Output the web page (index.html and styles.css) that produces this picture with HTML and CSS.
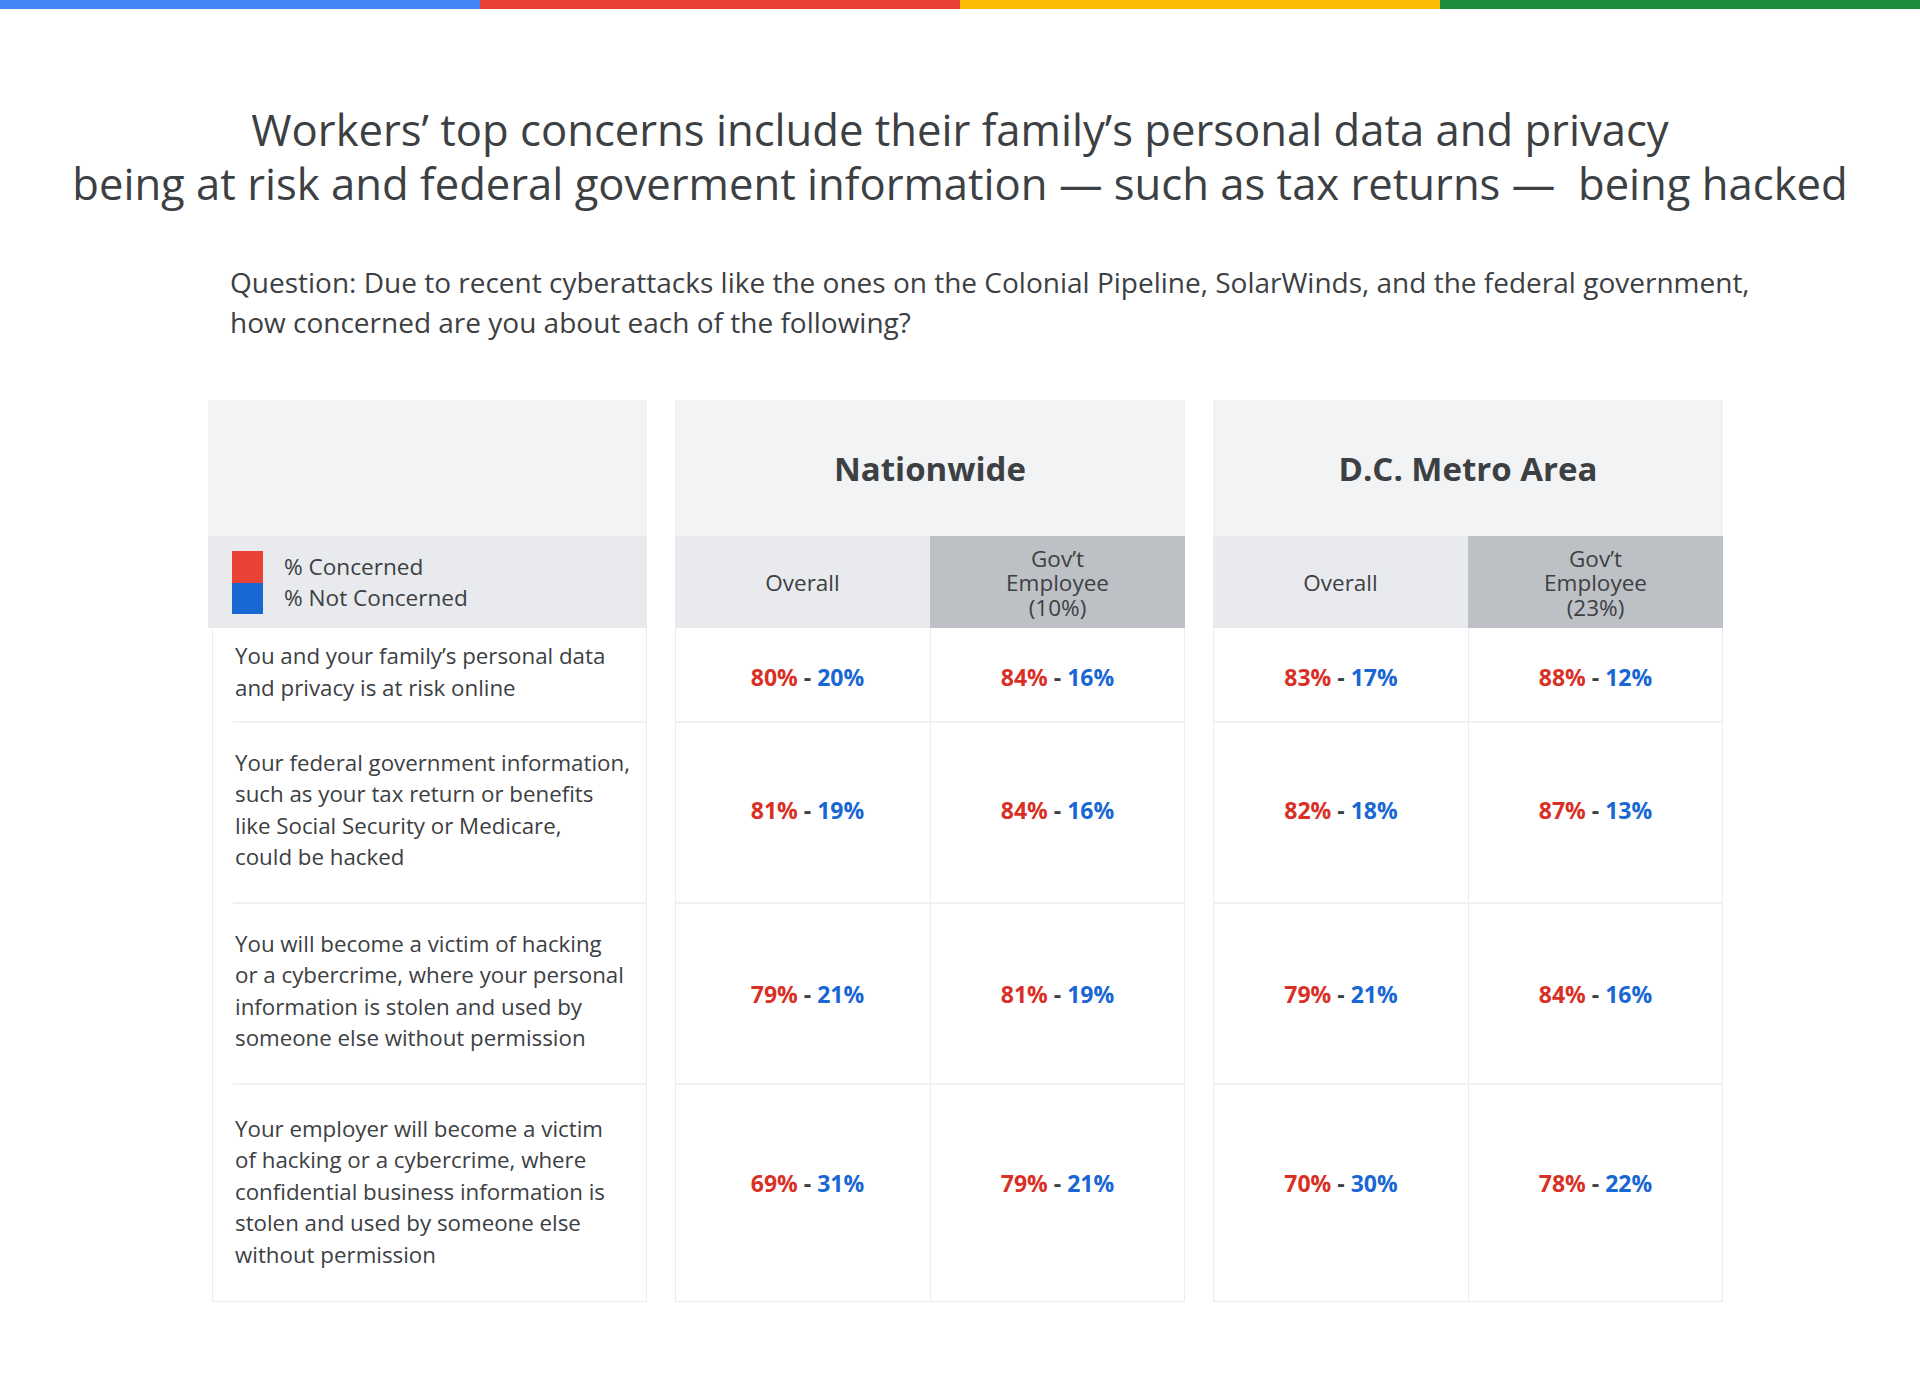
FILE: index.html
```html
<!DOCTYPE html>
<html lang="en">
<head>
<meta charset="utf-8">
<title>Workers' top concerns</title>
<link rel="stylesheet" href="styles.css">
</head>
<body>
<div class="topbar">
  <div class="seg seg-blue"></div>
  <div class="seg seg-red"></div>
  <div class="seg seg-yellow"></div>
  <div class="seg seg-green"></div>
</div>

<h1 class="title">Workers’ top concerns include their family’s personal data and privacy<br>being at risk and federal goverment information — such as tax returns —&nbsp; being hacked</h1>

<p class="question">Question: Due to recent cyberattacks like the ones on the Colonial Pipeline, SolarWinds, and the federal government,<br>how concerned are you about each of the following?</p>

<div class="table">
  <div class="card card-labels">
    <div class="band band-top"></div>
    <div class="band band-sub legend">
      <div class="legend-swatches">
        <span class="swatch swatch-red"></span>
        <span class="swatch swatch-blue"></span>
      </div>
      <div class="legend-text">
        <div>% Concerned</div>
        <div>% Not Concerned</div>
      </div>
    </div>
    <div class="body">
      <div class="label-row r1"><p>You and your family’s personal data<br>and privacy is at risk online</p></div>
      <div class="label-row r2 divided"><p>Your federal government information,<br>such as your tax return or benefits<br>like Social Security or Medicare,<br>could be hacked</p></div>
      <div class="label-row r3 divided"><p>You will become a victim of hacking<br>or a cybercrime, where your personal<br>information is stolen and used by<br>someone else without permission</p></div>
      <div class="label-row r4 divided"><p>Your employer will become a victim<br>of hacking or a cybercrime, where<br>confidential business information is<br>stolen and used by someone else<br>without permission</p></div>
    </div>
  </div>

  <div class="card card-data card-nation">
    <div class="band band-top group-title">Nationwide</div>
    <div class="band band-sub subcols">
      <div class="subcol">Overall</div>
      <div class="subcol subcol-gov"><div class="subline">Gov’t</div><div class="subline">Employee</div><div class="subline">(10%)</div></div>
    </div>
    <div class="body">
      <div class="data-row r1"><div class="cell"><span class="pos">80%</span> - <span class="neg">20%</span></div><div class="cell"><span class="pos">84%</span> - <span class="neg">16%</span></div></div>
      <div class="data-row r2"><div class="cell"><span class="pos">81%</span> - <span class="neg">19%</span></div><div class="cell"><span class="pos">84%</span> - <span class="neg">16%</span></div></div>
      <div class="data-row r3"><div class="cell"><span class="pos">79%</span> - <span class="neg">21%</span></div><div class="cell"><span class="pos">81%</span> - <span class="neg">19%</span></div></div>
      <div class="data-row r4"><div class="cell"><span class="pos">69%</span> - <span class="neg">31%</span></div><div class="cell"><span class="pos">79%</span> - <span class="neg">21%</span></div></div>
    </div>
  </div>

  <div class="card card-data">
    <div class="band band-top group-title">D.C. Metro Area</div>
    <div class="band band-sub subcols">
      <div class="subcol">Overall</div>
      <div class="subcol subcol-gov"><div class="subline">Gov’t</div><div class="subline">Employee</div><div class="subline">(23%)</div></div>
    </div>
    <div class="body">
      <div class="data-row r1"><div class="cell"><span class="pos">83%</span> - <span class="neg">17%</span></div><div class="cell"><span class="pos">88%</span> - <span class="neg">12%</span></div></div>
      <div class="data-row r2"><div class="cell"><span class="pos">82%</span> - <span class="neg">18%</span></div><div class="cell"><span class="pos">87%</span> - <span class="neg">13%</span></div></div>
      <div class="data-row r3"><div class="cell"><span class="pos">79%</span> - <span class="neg">21%</span></div><div class="cell"><span class="pos">84%</span> - <span class="neg">16%</span></div></div>
      <div class="data-row r4"><div class="cell"><span class="pos">70%</span> - <span class="neg">30%</span></div><div class="cell"><span class="pos">78%</span> - <span class="neg">22%</span></div></div>
    </div>
  </div>
</div>
</body>
</html>
```

FILE: styles.css
```css
* { box-sizing: border-box; }

body {
  margin: 0;
  background: #ffffff;
  color: #3c4043;
  font-family: "Open Sans", Roboto, "Liberation Sans", sans-serif;
}

.topbar {
  display: flex;
  height: 9px;
}
.seg { flex: 1; }
.seg-blue { background: #4285f4; }
.seg-red { background: #ea4335; }
.seg-yellow { background: #fbbc04; }
.seg-green { background: #1e8e3e; }

.title {
  margin: 93px 0 0;
  text-align: center;
  font-size: 43.6px;
  line-height: 54px;
  font-weight: 400;
  color: #3c4043;
}

.question {
  margin: 52px 0 0;
  padding-left: 230px;
  font-size: 28px;
  line-height: 40px;
  color: #3c4043;
}

.table {
  display: flex;
  gap: 28px;
  margin-top: 58px;
  padding-left: 208px;
  align-items: flex-start;
}

.card {
  display: flex;
  flex-direction: column;
}
.card-labels { width: 439px; }
.card-data { width: 510px; }

.band-top {
  height: 136px;
  background: #f1f3f4;
}
.band-sub {
  height: 92px;
  background: #e8eaed;
}

.group-title {
  display: flex;
  align-items: center;
  justify-content: center;
  font-size: 33px;
  font-weight: 700;
  color: #3c4043;
}

.legend {
  display: flex;
  align-items: center;
  padding-left: 24px;
  gap: 21px;
}
.legend-swatches {
  display: flex;
  flex-direction: column;
}
.swatch {
  display: block;
  width: 31px;
  height: 32px;
}
.swatch-red { background: #ea4335; }
.swatch-blue { background: #1967d2; height: 31px; }
.legend-text {
  font-size: 22.6px;
  line-height: 31px;
  color: #3c4043;
}

.subcols {
  display: flex;
}
.subcol {
  flex: 0 0 50%;
  display: flex;
  flex-direction: column;
  align-items: center;
  justify-content: center;
  text-align: center;
  padding-top: 3px;
  font-size: 22.5px;
  line-height: 24.5px;
  color: #3c4043;
}
.subline {
  height: 24.5px;
}
.subcol-gov {
  background: #bdc1c6;
}

.body {
  border: 1px solid #ececec;
  border-top: none;
  background: #ffffff;
}
.card-labels .body {
  margin-left: 4px;
}

.r1 { height: 93px; }
.r2 { height: 181px; }
.r3 { height: 181px; }
.r4 { height: 218px; }

.label-row {
  display: flex;
  align-items: center;
  margin-left: 20px;
  padding-left: 2px;
  padding-bottom: 6px;
}
.label-row.r4 {
  padding-bottom: 3px;
}
.label-row p {
  margin: 0;
  font-size: 22.3px;
  line-height: 31.5px;
  color: #3c4043;
}
.divided {
  border-top: 2px solid #f1f1f1;
}

.data-row {
  display: flex;
}
.data-row + .data-row {
  border-top: 2px solid #f1f1f1;
}
.data-row.r1 .cell {
  padding-top: 5px;
}
.data-row.r2 .cell {
  padding-bottom: 6px;
}
.data-row.r4 .cell {
  padding-bottom: 20px;
}
.cell {
  flex: 0 0 50%;
  display: flex;
  align-items: center;
  justify-content: center;
  font-size: 23px;
  font-weight: 700;
  color: #3c4043;
  white-space: pre;
}
.card-nation .data-row .cell:first-child {
  padding-left: 9px;
}
.cell + .cell {
  border-left: 1px solid #ececec;
}
.pos { color: #d93025; }
.neg { color: #1967d2; }
```
